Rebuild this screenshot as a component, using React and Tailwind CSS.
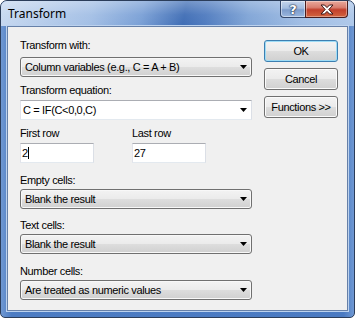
import React from "react";

const face =
  "bg-[linear-gradient(to_bottom,#f3f3f3_0%,#ebebeb_48%,#dddddd_52%,#d0d0d0_100%)]";

function Arrow() {
  return (
    <svg width="7" height="4" viewBox="0 0 7 4" className="block">
      <path d="M0 0H7L3.5 4Z" fill="#000" />
    </svg>
  );
}

function Label({ children, className = "" }) {
  return (
    <div className={`h-[13px] leading-[13px] whitespace-nowrap ${className}`}>
      {children}
    </div>
  );
}

function ComboList({ value, className = "" }) {
  return (
    <div
      className={`flex h-[20px] items-center rounded-[3px] border border-[#707070] ${face} shadow-[inset_0_0_0_1px_#f8f8f8] pl-[4px] pr-[4px] ${className}`}
    >
      <span className="flex-1 whitespace-nowrap">{value}</span>
      <Arrow />
    </div>
  );
}

function ComboEdit({ value, className = "" }) {
  return (
    <div
      className={`flex h-[20px] items-center border border-[#abadb3] border-b-[#e3e9ef] border-l-[#e2e3ea] border-r-[#dbdfe6] bg-white pl-[2px] pr-[4px] ${className}`}
    >
      <span className="flex-1 whitespace-nowrap">{value}</span>
      <Arrow />
    </div>
  );
}

function Edit({ value, caret }) {
  return (
    <div className="flex h-[20px] w-[74px] items-center border border-[#abadb3] border-b-[#e3e9ef] border-l-[#e2e3ea] border-r-[#dbdfe6] bg-white pl-[1px]">
      <span>{value}</span>
      {caret && <span className="ml-[0px] h-[12px] w-px bg-black" />}
    </div>
  );
}

function Button({ children, def }) {
  return (
    <div
      className={`flex h-[22px] w-[74px] items-center justify-center rounded-[3px] border ${face} ${
        def
          ? "border-[#3c7fb1] shadow-[inset_0_0_0_1px_#9edcf6]"
          : "border-[#707070] shadow-[inset_0_0_0_1px_#fbfbfb]"
      }`}
    >
      {children}
    </div>
  );
}

export default function App() {
  return (
    <div className="w-[355px] h-[318px] font-['Liberation_Sans',Arial,sans-serif] text-[11px] tracking-[-0.35px] text-black">
      <div className="relative flex h-[318px] w-[355px] flex-col overflow-hidden rounded-t-[7px] rounded-b-[5px] border border-[#2b3d5a] bg-[linear-gradient(to_right,#6f98d2_0%,#4c7cc3_3%,#4a7ac2_97%,#6f98d2_100%)]">
        <div className="h-[25px] shrink-0 bg-[linear-gradient(to_bottom,rgba(255,255,255,0.28)_0%,rgba(255,255,255,0.05)_55%,rgba(255,255,255,0)_100%),linear-gradient(100deg,#c6d8f0_0%,#b7cdeb_12%,#a3bfe5_26%,#7aa0d6_40%,#3f6db5_52%,#4f7bbf_58%,#7fa4d6_70%,#a0bde4_85%,#aec8ea_100%)]">
          <div className="pl-[7px] pt-[5px] font-['Noto_Sans','Open_Sans',sans-serif] text-[12px] leading-[16px] tracking-normal">
            Transform
          </div>
        </div>

        <div className="absolute top-0 right-[6px] flex">
          <div className="flex h-[17px] w-[25px] items-center justify-center rounded-bl-[4px] border border-t-0 border-r-0 border-[#34476a] bg-[linear-gradient(to_bottom,#c4d5ec_0%,#a3bcdf_45%,#7d9ccb_55%,#9bb7de_100%)] shadow-[inset_0_0_0_1px_rgba(255,255,255,0.45)]">
            <span className="font-['DejaVu_Sans',sans-serif] text-[13px] font-bold leading-none tracking-normal text-white [text-shadow:0_0_1px_#1c2c48,0_0_1px_#1c2c48,0_0_2px_#1c2c48]">
              ?
            </span>
          </div>
          <div className="flex h-[17px] w-[43px] items-center justify-center rounded-br-[4px] border border-t-0 border-[#4a1d1d] bg-[linear-gradient(to_bottom,#e9a99c_0%,#d97f70_40%,#c2402c_55%,#d2643f_100%)] shadow-[inset_0_0_0_1px_rgba(255,255,255,0.35)]">
            <svg width="14" height="11" viewBox="0 0 14 11">
              <path
                d="M1 1H4.5L7 3.6L9.5 1H13L8.8 5.5L13 10H9.5L7 7.4L4.5 10H1L5.2 5.5Z"
                fill="#fff"
                stroke="#3a1414"
                strokeWidth="1"
                strokeLinejoin="round"
              />
            </svg>
          </div>
        </div>

        <div className="mx-[6px] flex h-[285px] shrink-0 border border-[#6680a8] bg-[#f0f0f0] shadow-[0_0_0_1px_#bcd2ee]">
          <div className="ml-[12px] w-[232px] pt-[12px]">
            <Label>Transform with:</Label>
            <ComboList className="mt-[5px]" value="Column variables (e.g., C = A + B)" />

            <Label className="mt-[7px]">Transform equation:</Label>
            <ComboEdit className="mt-[3px]" value="C = IF(C<0,0,C)" />

            <div className="mt-[7px] grid grid-cols-[112px_74px]">
              <div>
                <Label>First row</Label>
                <div className="mt-[3px]">
                  <Edit value="2" caret />
                </div>
              </div>
              <div>
                <Label>Last row</Label>
                <div className="mt-[3px]">
                  <Edit value="27" />
                </div>
              </div>
            </div>

            <Label className="mt-[11px]">Empty cells:</Label>
            <ComboList className="mt-[2px]" value="Blank the result" />

            <Label className="mt-[10px]">Text cells:</Label>
            <ComboList className="mt-[2px]" value="Blank the result" />

            <Label className="mt-[11px]">Number cells:</Label>
            <ComboList className="mt-[2px]" value="Are treated as numeric values" />
          </div>

          <div className="ml-[12px] flex flex-col gap-[6px] pt-[13px]">
            <Button def>OK</Button>
            <Button>Cancel</Button>
            <Button>Functions &gt;&gt;</Button>
          </div>
        </div>
      </div>
    </div>
  );
}
